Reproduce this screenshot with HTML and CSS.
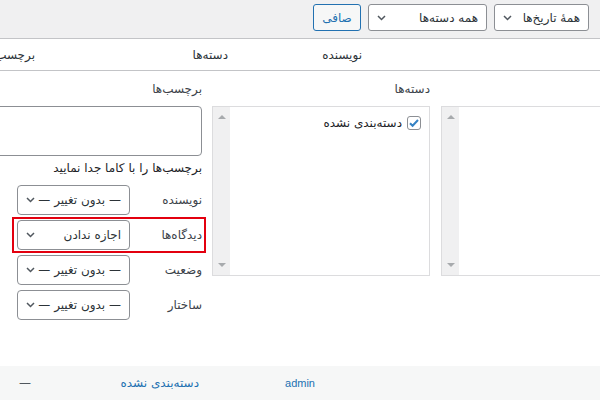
FILE: index.html
```html
<!DOCTYPE html>
<html lang="fa" dir="rtl">

<head>
  <meta charset="UTF-8" />
  <meta name="viewport" content="width=device-width, initial-scale=1.0" />
  <title>نوشته‌ها</title>
  <link rel="stylesheet" href="styles.css">
</head>

<body>
  <!-- نوار فیلتر بالا -->
  <div class="tablenav">
    <div class="select select-dates">
      <span>همهٔ تاریخ‌ها</span>
      <svg width="9" height="6" viewBox="0 0 9 6"><path d="M1 1l3.5 3.5L8 1" fill="none" stroke="#50575e" stroke-width="1.5"/></svg>
    </div>
    <div class="select select-cats">
      <span>همه دسته‌ها</span>
      <svg width="9" height="6" viewBox="0 0 9 6"><path d="M1 1l3.5 3.5L8 1" fill="none" stroke="#50575e" stroke-width="1.5"/></svg>
    </div>
    <button class="filter-btn">صافی</button>
  </div>

  <!-- سرستون‌ها -->
  <div class="thead">
    <div class="th th-author">نویسنده</div>
    <div class="th th-cats">دسته‌ها</div>
    <div class="th th-tags">برچسب‌ها</div>
  </div>

  <!-- ویرایش گروهی -->
  <div class="bulk-edit">
    <div class="col col-titles">
      <span class="label">&nbsp;</span>
      <div class="scroll-box">
        <div class="scroll-list"></div>
        <div class="scrollbar"><i class="arrow-up"></i><i class="arrow-down"></i></div>
      </div>
    </div>

    <div class="col col-cats">
      <span class="label">دسته‌ها</span>
      <div class="scroll-box">
        <div class="scroll-list">
          <label class="cat-item">
            <span class="checkbox">
              <svg width="12" height="12" viewBox="0 0 12 12"><path d="M2 6.2l2.6 2.6L10 3" fill="none" stroke="#3582c4" stroke-width="2"/></svg>
            </span>
            <span>دسته‌بندی نشده</span>
          </label>
        </div>
        <div class="scrollbar"><i class="arrow-up"></i><i class="arrow-down"></i></div>
      </div>
    </div>

    <div class="col col-tags">
      <span class="label">برچسب‌ها</span>
      <div class="tags-area"></div>
      <div class="hint">برچسب‌ها را با کاما جدا نمایید</div>

      <div class="field-row first">
        <span>نویسنده</span>
        <div class="select">
          <span>— بدون تغییر —</span>
          <svg width="9" height="6" viewBox="0 0 9 6"><path d="M1 1l3.5 3.5L8 1" fill="none" stroke="#50575e" stroke-width="1.5"/></svg>
        </div>
      </div>
      <div class="field-row highlight">
        <span>دیدگاه‌ها</span>
        <div class="select">
          <span>اجازه ندادن</span>
          <svg width="9" height="6" viewBox="0 0 9 6"><path d="M1 1l3.5 3.5L8 1" fill="none" stroke="#50575e" stroke-width="1.5"/></svg>
        </div>
      </div>
      <div class="field-row">
        <span>وضعیت</span>
        <div class="select">
          <span>— بدون تغییر —</span>
          <svg width="9" height="6" viewBox="0 0 9 6"><path d="M1 1l3.5 3.5L8 1" fill="none" stroke="#50575e" stroke-width="1.5"/></svg>
        </div>
      </div>
      <div class="field-row">
        <span>ساختار</span>
        <div class="select">
          <span>— بدون تغییر —</span>
          <svg width="9" height="6" viewBox="0 0 9 6"><path d="M1 1l3.5 3.5L8 1" fill="none" stroke="#50575e" stroke-width="1.5"/></svg>
        </div>
      </div>
    </div>
  </div>

  <!-- ردیف نوشته -->
  <div class="post-row">
    <div class="td td-author">admin</div>
    <div class="td td-cats">دسته‌بندی نشده</div>
    <div class="td td-tags">—</div>
  </div>
</body>

</html>
```

FILE: styles.css
```css
body {
  margin: 0;
  width: 600px;
  height: 400px;
  overflow: hidden;
  font-family: 'DejaVu Sans', sans-serif;
  font-size: 12px;
  color: #1d2327;
  background-color: #fff;
}

/* نوار بالا */
.tablenav {
  display: flex;
  align-items: flex-start;
  gap: 7px;
  height: 39px;
  padding: 4px 11px 0 0;
  box-sizing: border-box;
  background-color: #f0f0f1;
  border-bottom: 1px solid #c3c4c7;
}

.select {
  display: flex;
  align-items: center;
  height: 27px;
  padding: 0 8px;
  box-sizing: border-box;
  border: 1px solid #8c8f94;
  border-radius: 3px;
  background-color: #fff;
  color: #2c3338;
  white-space: nowrap;
}

.select svg {
  margin-right: auto;
  flex-shrink: 0;
}

.select-dates {
  width: 95px;
}

.select-cats {
  width: 119px;
}

.filter-btn {
  width: 48px;
  height: 27px;
  padding: 0;
  font: inherit;
  color: #2271b1;
  background-color: #f6f7f7;
  border: 1px solid #2271b1;
  border-radius: 3px;
}

/* سرستون‌ها */
.thead {
  display: flex;
  align-items: center;
  height: 32px;
  padding-right: 238px;
  box-sizing: border-box;
  border-bottom: 1px solid #c3c4c7;
  color: #2c3338;
  white-space: nowrap;
}

.th-author {
  flex: 0 0 134px;
}

.th-cats {
  flex: 0 0 193px;
}

.th-tags {
  flex: 0 0 auto;
}

/* ویرایش گروهی */
.bulk-edit {
  display: flex;
  gap: 10px;
  height: 295px;
  padding-top: 8px;
  box-sizing: border-box;
}

.col-titles {
  flex: 0 0 219px;
  margin-right: -60px;
}

.col-cats {
  flex: 0 0 218px;
  margin-right: 1px;
}

.col-tags {
  flex: 1;
  min-width: 0;
}

.label {
  display: block;
  height: 20px;
  line-height: 20px;
  margin-bottom: 7px;
  color: #3c434a;
  white-space: nowrap;
}

.scroll-box {
  display: flex;
  height: 170px;
  box-sizing: border-box;
  border: 1px solid #dcdcde;
}

.scroll-list {
  flex: 1;
  padding: 9px 8px 0 0;
}

.scrollbar {
  width: 17px;
  display: flex;
  flex-direction: column;
  justify-content: space-between;
  align-items: center;
  padding: 8px 0;
  background-color: #f0f0f1;
}

.arrow-up {
  border: 4px solid transparent;
  border-top: 0;
  border-bottom-color: #a7aaad;
}

.arrow-down {
  border: 4px solid transparent;
  border-bottom: 0;
  border-top-color: #a7aaad;
}

.cat-item {
  display: flex;
  align-items: center;
  gap: 5px;
  white-space: nowrap;
}

.checkbox {
  display: flex;
  justify-content: center;
  align-items: center;
  width: 14px;
  height: 14px;
  box-sizing: border-box;
  border: 1px solid #8c8f94;
  border-radius: 3px;
}

.tags-area {
  height: 50px;
  margin-left: -20px;
  box-sizing: border-box;
  border: 1px solid #8c8f94;
  border-radius: 4px;
}

.hint {
  margin-top: 2px;
  line-height: 20px;
  white-space: nowrap;
}

.field-row {
  display: flex;
  justify-content: space-between;
  align-items: center;
  height: 32px;
  margin: 0 -2px 3px 14px;
  padding: 0 2px 0 3px;
  color: #3c434a;
}

.field-row.first {
  margin-top: 6px;
}

.field-row.highlight {
  outline: 2px solid #e3000f;
}

.field-row .select {
  width: 113px;
  height: 30px;
  border-radius: 4px;
}

/* ردیف نوشته */
.post-row {
  display: flex;
  align-items: center;
  height: 34px;
  padding-right: 285px;
  background-color: #f6f7f7;
  white-space: nowrap;
}

.td-author {
  flex: 0 0 116px;
  color: #2271b1;
  font-family: 'Liberation Sans', sans-serif;
  font-size: 11px;
}

.td-cats {
  flex: 0 0 168px;
  color: #2271b1;
}

.td-tags {
  color: #50575e;
}
```
